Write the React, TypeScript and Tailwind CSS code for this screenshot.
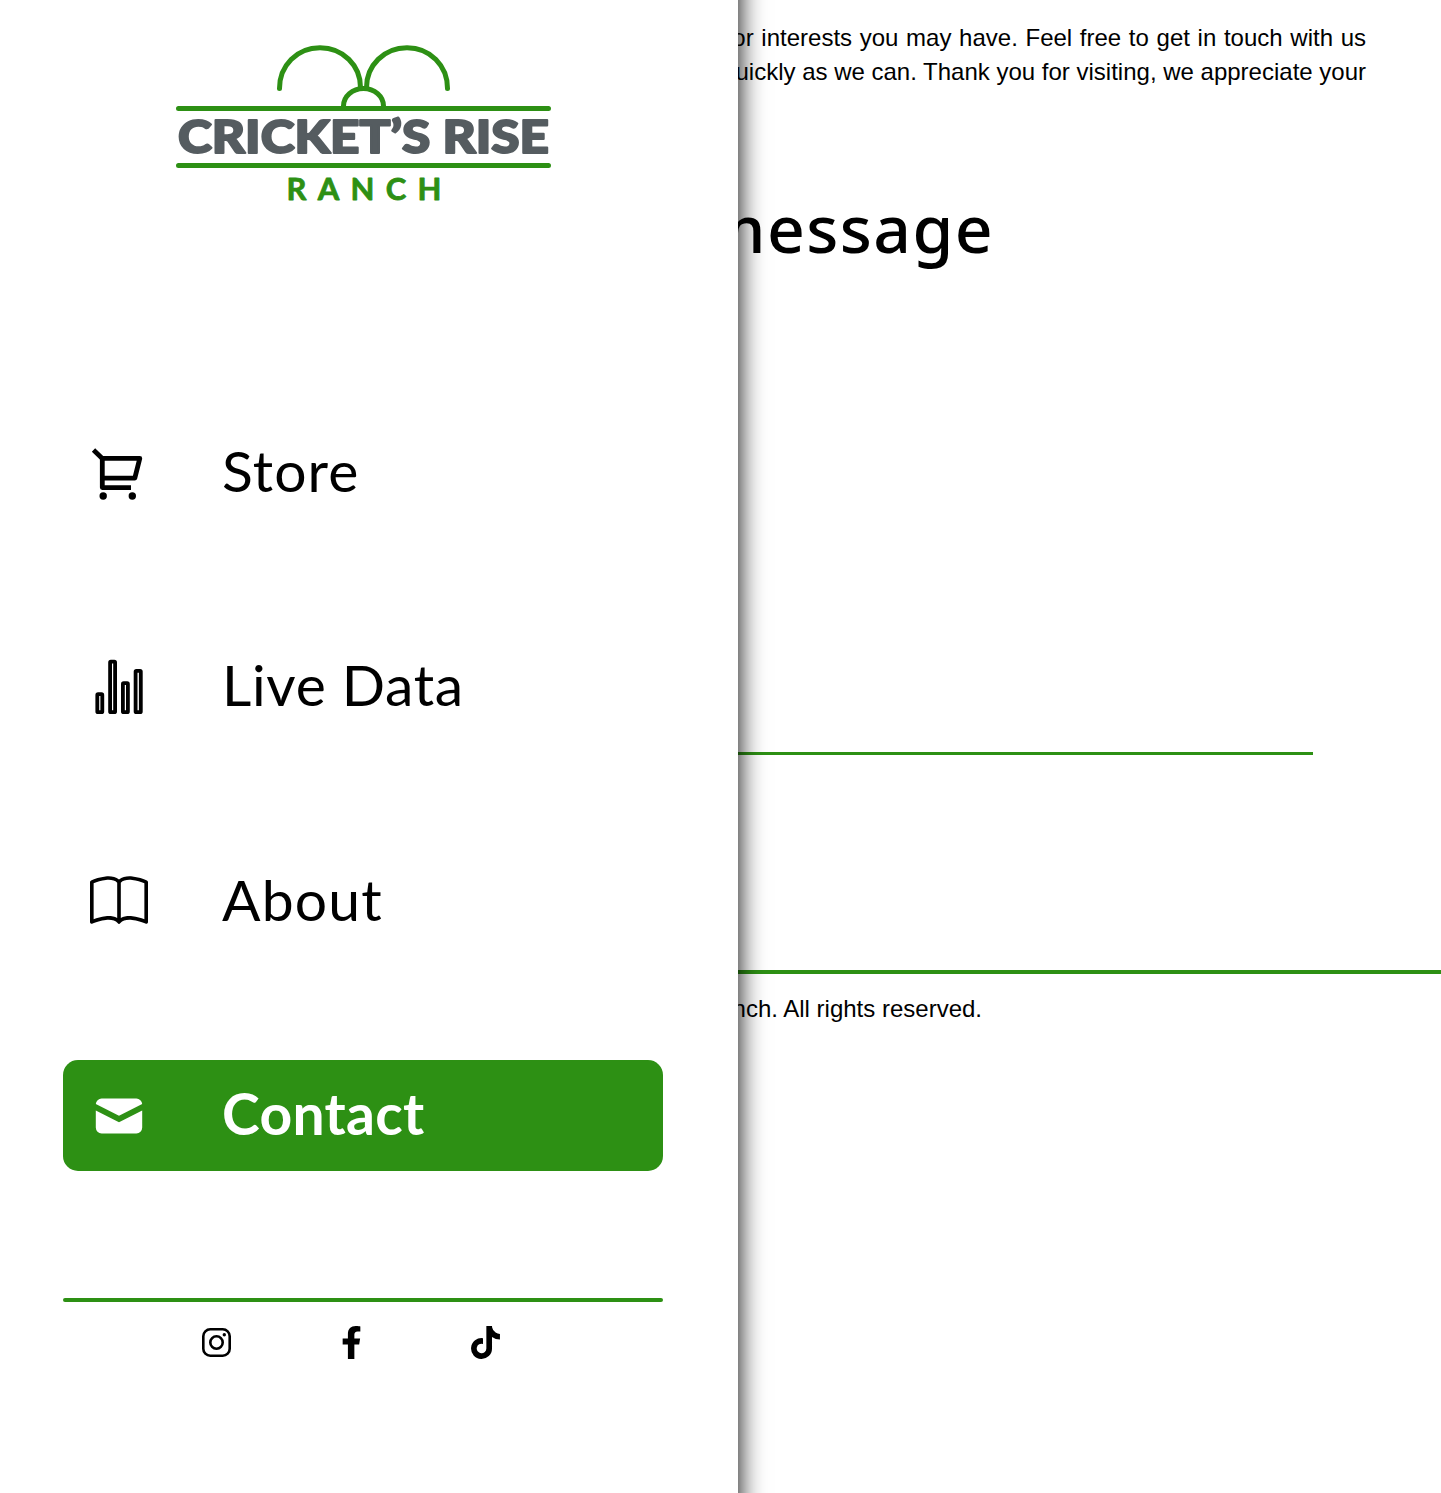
import type { ReactNode } from "react";
import { BsBook } from "react-icons/bs";
import { FaFacebookF, FaTiktok } from "react-icons/fa";

function Logo() {
  return (
    <svg className="block h-[180px] w-[376px] overflow-visible" viewBox="176 43 376 180" fill="none" stroke="#2d9014" strokeWidth="5" strokeLinecap="round">
      <path d="M279.500 88.500C279.500 65.500 297 47.800 320 47.800S360.500 65.500 360.500 87.500M366.500 87.500C366.500 65.500 384 47.800 407 47.800S447.500 65.500 447.500 88.500" />
      <path d="M343.500 106a20 17.500 0 0 1 40 0" />
      <path d="M178.500 108.500h370M178.500 165.500h370" />
      <text x="178" y="153" textLength="371" lengthAdjust="spacingAndGlyphs" fill="#555c60" stroke="#555c60" strokeWidth="2" strokeLinejoin="round" fontFamily="Lato, sans-serif" fontWeight="900" fontSize="45">CRICKET’S RISE</text>
      <text x="286.500" y="200" textLength="155" fill="#2d9014" stroke="#2d9014" strokeWidth="0.8" strokeLinejoin="round" fontFamily="Lato, sans-serif" fontWeight="700" fontSize="31">RANCH</text>
    </svg>
  );
}

function CartIcon() {
  return (
    <svg className="size-[58px]" viewBox="90 444 58 58" fill="none" stroke="currentColor" strokeWidth="4.800">
      <path d="M93.500 450l8.800 8.400h37.500l-5 19.700h-32.500" strokeLinejoin="round" />
      <path d="M102.300 457v30.600H131" strokeLinejoin="round" />
      <g fill="currentColor" stroke="none">
        <circle cx="103.200" cy="496" r="3.700" />
        <circle cx="132.300" cy="496" r="3.700" />
      </g>
    </svg>
  );
}

function BarsIcon() {
  return (
    <svg className="size-[58px]" viewBox="90 658 58 58" fill="none" stroke="currentColor" strokeWidth="3.800">
      <rect x="97.300" y="694.200" width="5" height="18" rx="0.800" />
      <rect x="110.100" y="661.600" width="5" height="50.600" rx="0.800" />
      <rect x="122.900" y="683.200" width="5" height="29" rx="0.800" />
      <rect x="135.600" y="670.800" width="5.200" height="41.400" rx="0.800" />
    </svg>
  );
}

function MailIcon() {
  return (
    <svg className="mt-px size-[58px]" viewBox="0 0 20 20" fill="currentColor">
      <path d="M2.003 5.884L10 9.882l7.997-3.998A2 2 0 0016 4H4a2 2 0 00-1.997 1.884z" />
      <path d="M18 8.118l-8 4-8-4V14a2 2 0 002 2h12a2 2 0 002-2V8.118z" />
    </svg>
  );
}

function InstagramIcon() {
  return (
    <svg className="size-[29px]" viewBox="0 0 29 29" fill="none" stroke="currentColor" strokeWidth="2.600">
      <rect x="1.300" y="1.300" width="26.400" height="26.400" rx="7" />
      <circle cx="14.500" cy="14.500" r="6.200" />
      <circle cx="22.300" cy="6.700" r="1.700" fill="currentColor" stroke="none" />
    </svg>
  );
}

function NavItem({ icon, label, className }: { icon: ReactNode; label: string; className: string }) {
  return (
    <a className={"flex h-[111px] items-center rounded-[15px] pl-[27px] text-[57px] " + className}>
      {icon}
      <span className="ml-[74px] whitespace-nowrap pb-1 leading-none">{label}</span>
    </a>
  );
}

export default function App() {
  return (
    <div className="flex h-[1493px] w-[1441px] overflow-hidden bg-white font-['Liberation_Sans',Arial,sans-serif] text-2xl text-black">
      <aside className="z-10 -my-10 flex w-[738px] shrink-0 flex-col bg-white pl-[63px] pr-[75px] pt-[83px] font-[Lato,sans-serif] shadow-[0_0_25px_#000]">
        <div className="pl-[113px]">
          <Logo />
        </div>
        <nav className="mt-[194px] flex flex-col gap-[103.300px]">
          <NavItem icon={<CartIcon />} label="Store" className="tracking-[1.100px]" />
          <NavItem icon={<BarsIcon />} label="Live Data" className="tracking-[0.700px]" />
          <NavItem icon={<BsBook className="mt-px size-[58px]" />} label="About" className="tracking-[1.200px]" />
          <NavItem icon={<MailIcon />} label="Contact" className="bg-[#2d9014] font-bold tracking-[0.300px] text-white" />
        </nav>
        <div className="mt-[127px] h-1 shrink-0 rounded-full bg-[#2d9014]" />
        <div className="mt-6 flex h-[33px] items-center pl-[139px]">
          <InstagramIcon />
          <FaFacebookF className="ml-[104px] size-[33px]" />
          <FaTiktok className="ml-[103px] h-[33px] w-[29px]" />
        </div>
      </aside>
      <main className="flex min-w-0 flex-1 flex-col">
        <div className="mt-[21px] flex flex-col items-end whitespace-nowrap pr-[75px] leading-[34px]">
          <p className="[word-spacing:1px]">or interests you may have. Feel free to get in touch with us</p>
          <p>quickly as we can. Thank you for visiting, we appreciate your</p>
        </div>
        <h1 className="mt-[98px] flex h-[80px] w-[256px] items-center justify-end whitespace-nowrap font-['Noto_Sans',sans-serif] text-[66px] font-medium leading-none tracking-[1.400px]">message</h1>
        <div className="mt-[485px] h-[3px] w-[575px] bg-[#2d9014]" />
        <div className="mt-[215px] h-1 bg-[#2d9014]" />
        <p className="mt-[18px] flex w-[244px] justify-end whitespace-nowrap leading-[34px]">Ranch. All rights reserved.</p>
      </main>
    </div>
  );
}
